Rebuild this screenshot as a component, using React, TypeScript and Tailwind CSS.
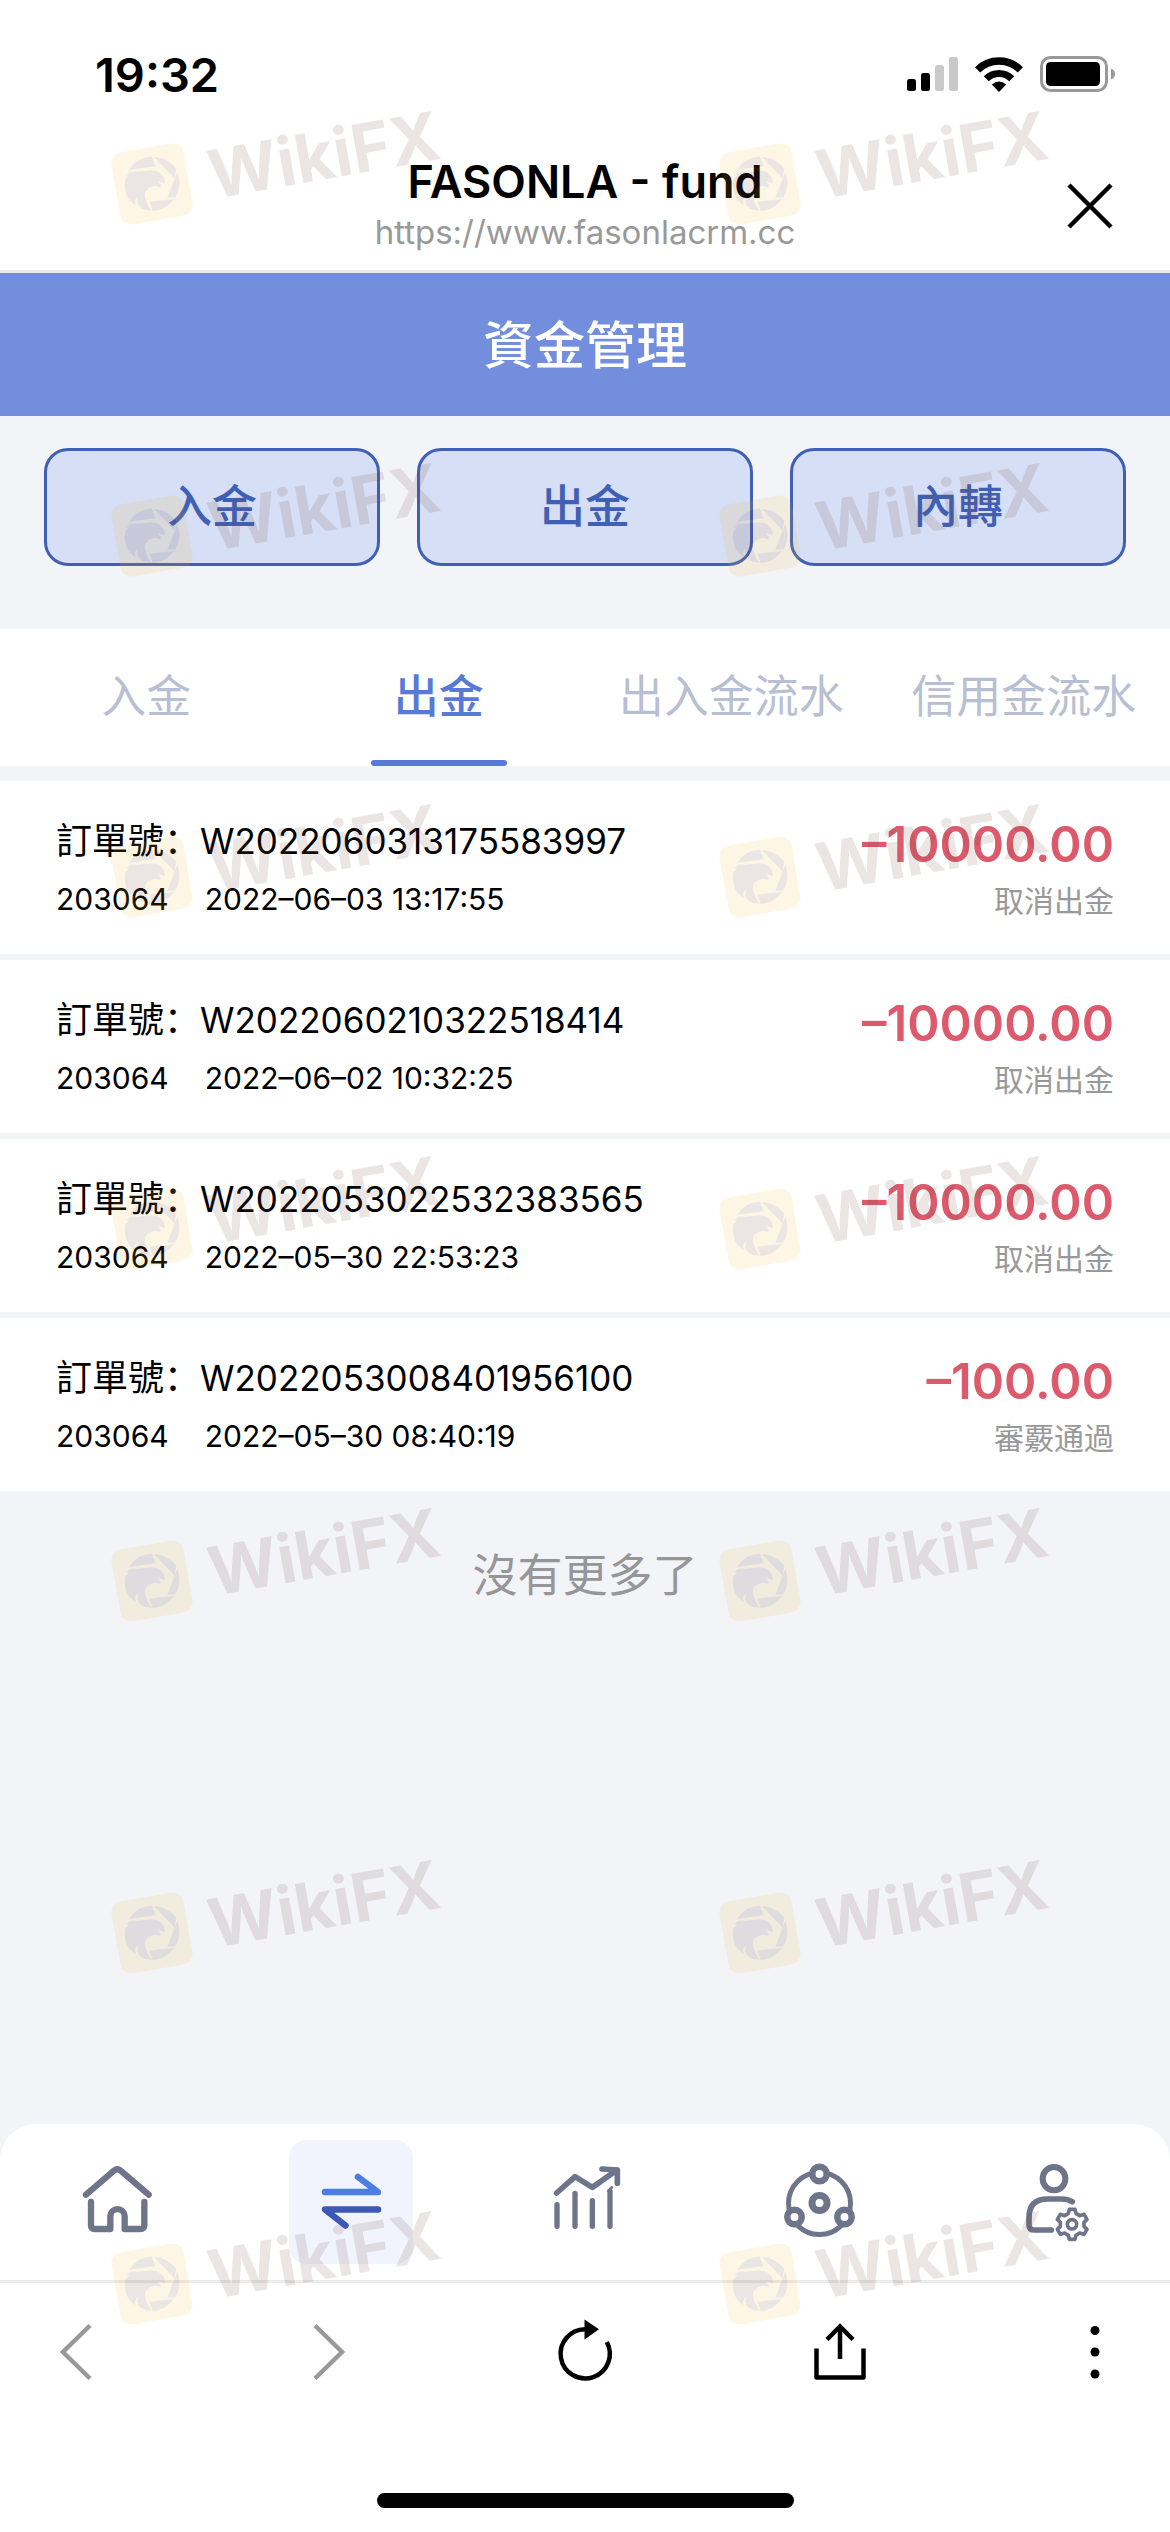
import { useState } from 'react';

type FundRecord = {
  orderNo: string;
  account: string;
  time: string;
  amount: string;
  status: string;
};

const ACTIONS = ['入金', '出金', '內轉'];
const TABS = ['入金', '出金', '出入金流水', '信用金流水'];

const RECORDS: FundRecord[] = [
  { orderNo: 'W2022060313175583997', account: '203064', time: '2022–06–03 13:17:55', amount: '–10000.00', status: '取消出金' },
  { orderNo: 'W2022060210322518414', account: '203064', time: '2022–06–02 10:32:25', amount: '–10000.00', status: '取消出金' },
  { orderNo: 'W2022053022532383565', account: '203064', time: '2022–05–30 22:53:23', amount: '–10000.00', status: '取消出金' },
  { orderNo: 'W2022053008401956100', account: '203064', time: '2022–05–30 08:40:19', amount: '–100.00', status: '審覈通過' },
];

function StatusBar() {
  return (
    <div className="flex h-[148px] items-center justify-between pr-[54px] pl-[95px]">
      <span className="text-[47px] leading-none font-semibold">19:32</span>
      <div className="flex items-center gap-[17px]">
        <svg width="51" height="36" viewBox="0 0 51 36">
          <rect x="0" y="23" width="9" height="12" rx="2.5" />
          <rect x="14" y="17" width="9" height="18" rx="2.5" />
          <rect x="28" y="9" width="9" height="26" rx="2.5" fill="#c9c9c9" />
          <rect x="42" y="1" width="9" height="34" rx="2.5" fill="#c9c9c9" />
        </svg>
        <svg width="48" height="36" viewBox="0 0 48 36">
          <path d="M24 36 16.8 28.6Q24 22.2 31.2 28.6Z" />
          <path d="M11.3 22.7a18 18 0 0 1 25.4 0" fill="none" stroke="#000" strokeWidth="7" />
          <path d="M2.6 13.8a30.3 30.3 0 0 1 42.8 0" fill="none" stroke="#000" strokeWidth="7.4" />
        </svg>
        <svg width="76" height="36" viewBox="0 0 76 36">
          <rect x="1.5" y="1.5" width="65" height="33" rx="9" fill="none" stroke="#999" strokeWidth="3" />
          <rect x="6" y="6" width="54" height="24" rx="4.5" />
          <path d="M71 12.5q4 1.5 4 5.5t-4 5.5z" fill="#999" />
        </svg>
      </div>
    </div>
  );
}

function BrowserHeader() {
  return (
    <header className="grid grid-cols-[1fr_auto_1fr] items-center border-b-[3px] border-[#e9eaec] pt-2 pb-3.5">
      <div />
      <div className="text-center">
        <h1 className="text-[45px] leading-[52px] font-semibold">FASONLA - fund</h1>
        <p className="text-[33px] leading-[48px] text-[#999]">https://www.fasonlacrm.cc</p>
      </div>
      <button type="button" aria-label="Close" className="mr-[54px] justify-self-end">
        <svg width="52" height="52" viewBox="0 0 52 52" stroke="#000" strokeWidth="4.5">
          <path d="M5 5 47 47M47 5 5 47" />
        </svg>
      </button>
    </header>
  );
}

function RecordRow({ record }: { record: FundRecord }) {
  return (
    <li className="flex justify-between bg-white px-14 pt-9 pb-[33px]">
      <div>
        <p className="flex text-[36px] leading-[48px]">
          <span>訂單號：</span>
          <span className="text-[35px]">{record.orderNo}</span>
        </p>
        <p className="mt-3.5 flex gap-9 text-[30px] leading-10">
          <span>{record.account}</span>
          <span>{record.time}</span>
        </p>
      </div>
      <div className="text-right">
        <p className="text-[49px] leading-[56px] font-semibold text-[#dc5a6c]">{record.amount}</p>
        <p className="mt-2 text-[30px] leading-10 text-[#999]">{record.status}</p>
      </div>
    </li>
  );
}

function HomeIcon() {
  return (
    <svg width="100" height="100" viewBox="-9 6 300 300" fill="none" stroke="#6e7489" strokeWidth="19" strokeLinecap="round" strokeLinejoin="round">
      <path d="M48 134 132 62q10-8 20 0l84 72" />
      <path d="M63 156v70q0 11 11 11h47v-38a21 21 0 0 1 43 0v38h46q13 0 13-11v-70" />
    </svg>
  );
}

function TransferIcon() {
  return (
    <svg width="100" height="100" viewBox="0 0 100 100" fill="none" strokeWidth="6.5" strokeLinecap="round" strokeLinejoin="round">
      <path d="M24 40H77L57 25" stroke="#4c7de0" />
      <path d="M77 57.5H24L44.5 73.5" stroke="#3c5ab4" />
    </svg>
  );
}

function ChartIcon() {
  return (
    <svg width="100" height="100" viewBox="-15 6 300 300" fill="none" stroke="#6e7489" strokeWidth="17" strokeLinecap="round" strokeLinejoin="round">
      <path d="M50 129 105 80l52 32 74-52M186 57l46 3v40" />
      <path d="M51 164v65M105 130v99M157 152v77M210 124v105" strokeWidth="16" />
      <path d="m205 122 11-10" strokeWidth="8" />
    </svg>
  );
}

function NodesIcon() {
  return (
    <svg width="100" height="100" viewBox="0 0 100 100" fill="none" stroke="#6e7489">
      <circle cx="50.5" cy="51.5" r="31" strokeWidth="5" />
      <circle cx="50.5" cy="51" r="7.5" strokeWidth="7" />
      <g fill="#fff" strokeWidth="6.5">
        <circle cx="50.5" cy="22" r="7.2" />
        <circle cx="25.5" cy="65" r="7.2" />
        <circle cx="75.5" cy="65" r="7.2" />
      </g>
    </svg>
  );
}

function ProfileIcon() {
  return (
    <svg width="100" height="100" viewBox="-21 6 300 300" fill="none" stroke="#6e7489" strokeWidth="18" strokeLinecap="round" strokeLinejoin="round">
      <ellipse cx="132" cy="86" rx="34" ry="35" />
      <path d="M187 155q-14-8-32-8h-42q-56 0-56 56v21q0 16 16 16h51" strokeWidth="17" />
      <path
        d="M175 190l3-12h17l3 12 11 7 13-4 9 15-9 9v12l9 9-9 15-13-4-11 7-3 12h-17l-3-12-11-7-13 4-9-15 9-9v-12l-9-9 9-15 13 4z"
        strokeWidth="11"
      />
      <circle cx="186" cy="223" r="14" strokeWidth="11" />
    </svg>
  );
}

const NAV_ITEMS = [
  { label: '首頁', icon: HomeIcon },
  { label: '資金', icon: TransferIcon },
  { label: '交易', icon: ChartIcon },
  { label: '代理', icon: NodesIcon },
  { label: '我的', icon: ProfileIcon },
];

function BottomNav() {
  const [active, setActive] = useState(1);

  return (
    <nav className="grid grid-cols-5 rounded-t-[36px] bg-white py-4">
      {NAV_ITEMS.map(({ label, icon: Icon }, index) => (
        <button
          key={label}
          type="button"
          aria-label={label}
          onClick={() => setActive(index)}
          className={`flex size-[124px] items-center justify-center justify-self-center rounded-[18px] ${active === index ? 'bg-[#f1f4fd]' : ''}`}
        >
          <Icon />
        </button>
      ))}
    </nav>
  );
}

function BrowserToolbar() {
  return (
    <div className="border-t-[3px] border-[#ebebeb] bg-white pb-6">
      <div className="flex justify-between px-[45px] pt-[39px]">
        <button type="button" aria-label="Back">
          <svg width="60" height="60" viewBox="0 0 60 60" fill="none" stroke="#999" strokeWidth="4.5">
            <path d="M45 3.5 18 30l27 26.5" />
          </svg>
        </button>
        <button type="button" aria-label="Forward">
          <svg width="60" height="60" viewBox="0 0 60 60" fill="none" stroke="#999" strokeWidth="4.5">
            <path d="M15 3.5 42 30 15 56.5" />
          </svg>
        </button>
        <button type="button" aria-label="Reload">
          <svg width="60" height="60" viewBox="0 0 60 60" className="overflow-visible">
            <path d="M30 7.2a24.6 24.6 0 1 0 21.8 12.8" fill="none" stroke="#000" strokeWidth="4.5" />
            <path d="M29.5-2.5 44 7.2 29.5 17.5z" />
          </svg>
        </button>
        <button type="button" aria-label="Share">
          <svg width="60" height="60" viewBox="0 0 60 60" fill="none" stroke="#000" strokeWidth="4.5">
            <path d="M30 5v32M17 17.5 30 4.5l13 13" />
            <path d="M6.5 26.5v29h47v-29" strokeLinejoin="round" />
          </svg>
        </button>
        <button type="button" aria-label="More">
          <svg width="60" height="60" viewBox="0 0 60 60">
            <circle cx="30" cy="8.5" r="4.5" />
            <circle cx="30" cy="30" r="4.5" />
            <circle cx="30" cy="52" r="4.5" />
          </svg>
        </button>
      </div>
      <div className="mx-auto mt-[111px] h-[15px] w-[417px] rounded-full bg-black" />
    </div>
  );
}

function WatermarkDefs() {
  return (
    <svg width="0" height="0" className="absolute">
      <defs>
        <g id="eagle" transform="translate(9 35) scale(.3333)">
          <path d="M72 101Q98 62 140 62L152 91Z" />
          <path d="M147 63Q190 66 214 98L208 127Z" />
          <path d="M217 107Q232 150 211 184L187 185Z" />
          <path d="M207 189Q176 226 143 224L134 197Z" />
          <path d="M64 119Q73 103 96 107L122 105Q160 99 173 119Q182 130 178 143Q170 136 158 137Q172 146 165 154Q150 144 134 154Q116 167 120 184Q124 204 139 224Q119 224 106 214Q93 202 99 179Q86 192 92 208Q56 186 60 138Q59 129 74 116Z" />
        </g>
        <mask id="badge" maskUnits="userSpaceOnUse" x="0" y="0" width="400" height="140">
          <rect width="400" height="140" fill="#fff" />
          <use href="#eagle" fill="#000" />
        </mask>
      </defs>
    </svg>
  );
}

function Watermark() {
  return (
    <svg width="400" height="140" viewBox="0 0 400 140" className="overflow-visible">
      <g mask="url(#badge)">
        <rect x="19.5" y="46.5" width="73" height="73" rx="11" transform="rotate(-10 56 83)" fill="#f0b41e" fillOpacity="0.12" />
      </g>
      <g fill="#704641" fillOpacity="0.14">
        <use href="#eagle" />
        <text x="117" y="98" transform="rotate(-10 117 98)" fontSize="67" fontWeight="700">
          WikiFX
        </text>
      </g>
    </svg>
  );
}

const WATERMARK_ROWS = ['mt-[101px]', 'mt-[212px]', 'mt-[201px]', 'mt-[212px]', 'mt-[212px]', 'mt-[212px]', 'mt-[211px]'];

// Two marks per row, laid over the whole screen
function WatermarkLayer() {
  return (
    <div aria-hidden="true" className="pointer-events-none absolute inset-0 flex flex-col overflow-hidden">
      <WatermarkDefs />
      {WATERMARK_ROWS.map((margin, index) => (
        <div key={index} className={`flex gap-[208px] pl-24 ${margin}`}>
          <Watermark />
          <Watermark />
        </div>
      ))}
    </div>
  );
}

export default function App() {
  const [activeTab, setActiveTab] = useState(1);

  return (
    <div className="relative flex min-h-screen flex-col bg-[#f2f4f8] font-['Inter','Noto_Sans_CJK_SC',sans-serif] text-black">
      <div className="bg-white">
        <StatusBar />
        <BrowserHeader />
      </div>

      <h2 className="bg-[#728edc] pt-[37px] pb-[35px] text-center text-[51px] leading-[71px] font-medium text-white">資金管理</h2>

      <div className="grid grid-cols-3 gap-[37px] px-11 pt-8 pb-[63px]">
        {ACTIONS.map((action) => (
          <button
            key={action}
            type="button"
            className="h-[118px] rounded-[24px] border-[3px] border-[#3f60b5] bg-[#d6dff5] text-[45px] font-medium text-[#3f60b5]"
          >
            {action}
          </button>
        ))}
      </div>

      <div role="tablist" className="grid grid-cols-4 bg-white">
        {TABS.map((tab, index) => (
          <button
            key={tab}
            type="button"
            role="tab"
            aria-selected={activeTab === index}
            onClick={() => setActiveTab(index)}
            className={`flex flex-col items-center pt-[38px] text-[45px] leading-[60px] whitespace-nowrap ${activeTab === index ? 'font-medium text-[#587ad6]' : 'text-[#b9bfd2]'}`}
          >
            {tab}
            <span className={`mt-[33px] h-1.5 w-[136px] rounded-full ${activeTab === index ? 'bg-[#587ad6]' : ''}`} />
          </button>
        ))}
      </div>

      <main className="flex-1 pt-[15px]">
        <ul className="flex flex-col gap-1.5">
          {RECORDS.map((record) => (
            <RecordRow key={record.orderNo} record={record} />
          ))}
        </ul>
        <p className="pt-[53px] text-center text-[45px] leading-[64px] text-[#969699]">沒有更多了</p>
      </main>

      <BottomNav />
      <BrowserToolbar />
      <WatermarkLayer />
    </div>
  );
}
